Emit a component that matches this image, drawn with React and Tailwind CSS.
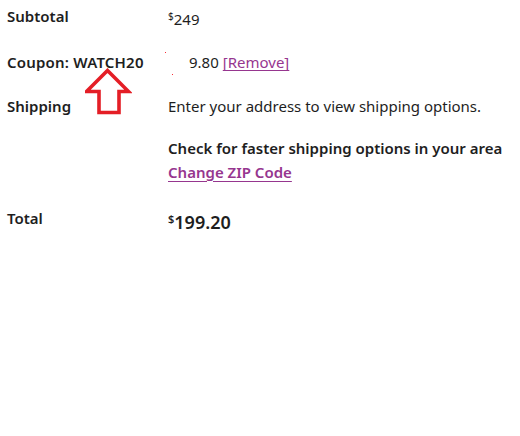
export default function App() {
  const font = { fontFamily: '"Noto Sans", "Open Sans", Arial, sans-serif' };
  return (
    <div className="relative w-[520px] h-[436px] bg-white text-[#1e1e1e] text-[15px] leading-6" style={font}>
      <div className="pl-[7px] pt-[4px] flex flex-col">
        {/* Subtotal */}
        <div className="grid grid-cols-[161px_1fr] h-[46px]">
          <div className="font-semibold">Subtotal</div>
          <div>
            <span className="text-[10px] align-[5px]">$</span>249
          </div>
        </div>

        {/* Coupon */}
        <div className="grid grid-cols-[161px_1fr] h-[44px]">
          <div className="font-semibold tracking-[0.2px]">Coupon: WATCH20</div>
          <div className="relative flex">
            <span className="absolute left-[-3px] top-[2px] w-[1px] h-[1px] bg-red-500"></span>
            <span className="absolute left-[4px] top-[24px] w-[1px] h-[1px] bg-red-500"></span>
            <span className="w-[21px]"></span>
            <span>9.80</span>
            <a href="#" className="ml-[4px] text-[#96368f] underline underline-offset-2">
              [Remove]
            </a>
          </div>
        </div>

        {/* Shipping */}
        <div className="grid grid-cols-[161px_1fr]">
          <div className="font-semibold">Shipping</div>
          <div className="flex flex-col">
            <p>Enter your address to view shipping options.</p>
            <p className="mt-[18px] font-semibold">Check for faster shipping options in your area</p>
            <a href="#" className="self-start font-semibold text-[#96368f] underline underline-offset-[3px]">
              Change ZIP Code
            </a>
          </div>
        </div>

        {/* Total */}
        <div className="grid grid-cols-[161px_1fr] mt-[22px]">
          <div className="font-semibold">Total</div>
          <div className="font-semibold text-[18px] leading-7 -mt-[1px]">
            <span className="text-[11px] align-[6px]">$</span>199.20
          </div>
        </div>
      </div>

      {/* annotation arrow */}
      <svg className="absolute left-[85px] top-[68px]" width="47" height="48" viewBox="0 0 47 48">
        <polygon
          points="22.5,2.5 43.5,23.5 34,23.5 34,44.5 14,44.5 14,23.5 1.5,23.5"
          fill="none"
          stroke="#e41e26"
          strokeWidth="3.6"
          strokeLinejoin="miter"
        />
      </svg>
    </div>
  );
}
